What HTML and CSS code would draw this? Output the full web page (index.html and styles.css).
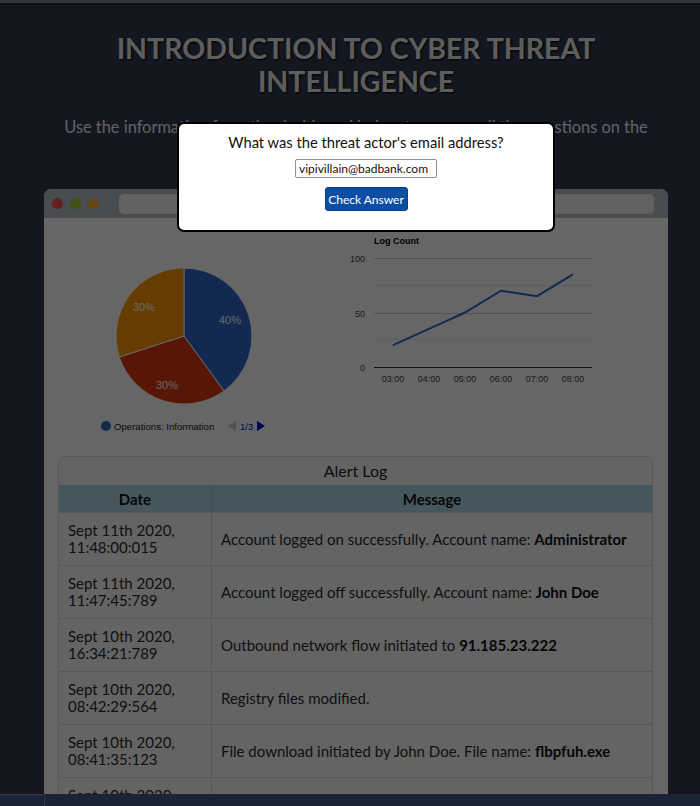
FILE: index.html
```html
<!DOCTYPE html>
<html lang="en">
<head>
<meta charset="utf-8">
<title>Introduction to Cyber Threat Intelligence</title>
<link rel="stylesheet" href="styles.css">
</head>
<body>
<div class="topstrip"></div>
<main class="page">
  <h1 class="title">INTRODUCTION TO CYBER THREAT<br>INTELLIGENCE</h1>
  <p class="lead">Use the information from the dashboard below to answer all the questions on the<br>next page.</p>

  <section class="window">
    <div class="window-bar">
      <span class="dot dot-red"></span>
      <span class="dot dot-green"></span>
      <span class="dot dot-orange"></span>
      <div class="address"></div>
    </div>
    <div class="window-body">
      <div class="charts">
        <svg class="pie" width="290" height="225" viewBox="0 0 290 225">
          <path d="M126 117 L126 49 A68 68 0 0 1 165.97 172.01 Z" fill="#3366cc" stroke="#ffffff" stroke-width="1"/>
          <path d="M126 117 L165.97 172.01 A68 68 0 0 1 61.33 138.01 Z" fill="#dc3912" stroke="#ffffff" stroke-width="1"/>
          <path d="M126 117 L61.33 138.01 A68 68 0 0 1 126 49 Z" fill="#ff9900" stroke="#ffffff" stroke-width="1"/>
          <text x="172" y="105" class="pie-label" text-anchor="middle">40%</text>
          <text x="109" y="170" class="pie-label" text-anchor="middle">30%</text>
          <text x="86" y="92" class="pie-label" text-anchor="middle">30%</text>
          <circle cx="48" cy="207" r="5" fill="#3366cc"/>
          <text x="56" y="211" class="legend">Operations: Information</text>
          <path d="M178 202 L178 212 L170 207 Z" fill="#cccccc"/>
          <text x="182" y="211" class="legend legend-page">1/3</text>
          <path d="M199 202 L199 212 L207 207 Z" fill="#0000cc"/>
        </svg>
        <svg class="line" width="305" height="225" viewBox="0 0 305 225">
          <text x="26" y="25" class="chart-title">Log Count</text>
          <line x1="26" y1="39.5" x2="244" y2="39.5" stroke="#cccccc"/>
          <line x1="26" y1="66.5" x2="244" y2="66.5" stroke="#ebebeb"/>
          <line x1="26" y1="94.5" x2="244" y2="94.5" stroke="#cccccc"/>
          <line x1="26" y1="120.5" x2="244" y2="120.5" stroke="#ebebeb"/>
          <line x1="26" y1="148.5" x2="244" y2="148.5" stroke="#333333"/>
          <text x="17" y="43" class="axis" text-anchor="end">100</text>
          <text x="17" y="98" class="axis" text-anchor="end">50</text>
          <text x="17" y="152" class="axis" text-anchor="end">0</text>
          <text x="45" y="163" class="axis" text-anchor="middle">03:00</text>
          <text x="81" y="163" class="axis" text-anchor="middle">04:00</text>
          <text x="117" y="163" class="axis" text-anchor="middle">05:00</text>
          <text x="153" y="163" class="axis" text-anchor="middle">06:00</text>
          <text x="189" y="163" class="axis" text-anchor="middle">07:00</text>
          <text x="225" y="163" class="axis" text-anchor="middle">08:00</text>
          <polyline points="45,126.2 81,109.9 117,93.5 153,71.7 189,77.2 225,55.4" fill="none" stroke="#3366cc" stroke-width="2"/>
        </svg>
      </div>

      <div class="panel">
        <div class="panel-title">Alert Log</div>
        <table class="log">
          <thead>
            <tr><th class="col-date">Date</th><th>Message</th></tr>
          </thead>
          <tbody>
            <tr><td>Sept 11th 2020,<br>11:48:00:015</td><td>Account logged on successfully. Account name: <b>Administrator</b></td></tr>
            <tr><td>Sept 11th 2020,<br>11:47:45:789</td><td>Account logged off successfully. Account name: <b>John Doe</b></td></tr>
            <tr><td>Sept 10th 2020,<br>16:34:21:789</td><td>Outbound network flow initiated to <b>91.185.23.222</b></td></tr>
            <tr><td>Sept 10th 2020,<br>08:42:29:564</td><td>Registry files modified.</td></tr>
            <tr><td>Sept 10th 2020,<br>08:41:35:123</td><td>File download initiated by John Doe. File name: <b>flbpfuh.exe</b></td></tr>
            <tr><td>Sept 10th 2020,<br>08:40:12:456</td><td>Account logged on successfully. Account name: <b>John Doe</b></td></tr>
          </tbody>
        </table>
      </div>
    </div>
  </section>
</main>

<div class="overlay">
  <div class="modal">
    <p class="question">What was the threat actor's email address?</p>
    <input class="answer" type="text" value="vipivillain@badbank.com">
    <button class="check" type="button">Check Answer</button>
  </div>
</div>

<div class="taskbar"><div class="tab"></div></div>
</body>
</html>
```

FILE: styles.css
```css
html, body {
  margin: 0;
  padding: 0;
  overflow: hidden;
  height: 100%;
}

body {
  background: #333a50;
  font-family: Lato, "Noto Sans", sans-serif;
  color: #333;
}

.topstrip {
  position: fixed;
  top: 0;
  left: 0;
  right: 0;
  height: 3px;
  background: #35353e;
  border-bottom: 2px solid #0e1015;
  z-index: 20;
}

.page {
  padding: 0 32px 0 44px;
}

.title {
  margin: 32px 0 0;
  font-size: 28.5px;
  line-height: 33px;
  font-weight: 700;
  text-align: center;
  color: #ececec;
  text-shadow: 1px 1px 2px #000;
}

.lead {
  margin: 17px 0 0;
  font-size: 16.4px;
  line-height: 24px;
  text-align: center;
  color: #f4f4f4;
  white-space: nowrap;
}

.window {
  margin-top: 26px;
  background: #ffffff;
  border-radius: 8px 8px 0 0;
  overflow: hidden;
}

.window-bar {
  height: 29px;
  background: #b4c0cd;
  display: flex;
  align-items: center;
  padding: 0 14px 0 8px;
  gap: 7px;
}

.dot {
  width: 11px;
  height: 11px;
  border-radius: 50%;
  flex: none;
}
.dot-red { background: #ff4b4b; }
.dot-green { background: #99cc33; }
.dot-orange { background: #ffaa33; }

.address {
  flex: 1;
  height: 20px;
  margin-left: 13px;
  background: #f5f5f5;
  border-radius: 5px;
}

.window-body {
  padding: 1px 15px 40px 14px;
}

.charts {
  display: flex;
}

.charts svg { display: block; }

.pie-label {
  font-family: "Liberation Sans", Arial, sans-serif;
  font-size: 11px;
  fill: #ffffff;
}

.legend {
  font-family: "Liberation Sans", Arial, sans-serif;
  font-size: 9.6px;
  fill: #222222;
}
.legend-page { fill: #0011cc; }

.chart-title {
  font-family: "Liberation Sans", Arial, sans-serif;
  font-size: 9px;
  font-weight: 700;
  fill: #000;
}

.axis {
  font-family: "Liberation Sans", Arial, sans-serif;
  font-size: 9px;
  fill: #444444;
}

.panel {
  margin-top: 12px;
  border: 1px solid #dddddd;
  border-radius: 8px 8px 0 0;
  background: #fafafa;
  overflow: hidden;
}

.panel-title {
  height: 28px;
  line-height: 28px;
  text-align: center;
  font-size: 16px;
  color: #222;
}

.log {
  width: 100%;
  border-collapse: collapse;
  font-size: 15px;
  color: #2a2a2a;
}

.log th {
  background: #add8e6;
  height: 27px;
  padding: 0;
  font-weight: 700;
  color: #111;
  border-right: 1px solid #9fc4d2;
}
.log th:last-child { border-right: 0; }

.log .col-date { width: 152px; }

.log td {
  padding: 9px 9px;
  line-height: 17px;
  text-align: left;
  vertical-align: middle;
  border-top: 1px solid #dddddd;
  border-right: 1px solid #dddddd;
}
.log td:last-child { border-right: 0; }

.log b { color: #111; }

.overlay {
  position: fixed;
  inset: 0;
  background: rgba(0, 0, 0, 0.6);
  z-index: 10;
  display: flex;
  justify-content: center;
  align-items: flex-start;
  padding: 122px 0 0 32px;
  box-sizing: border-box;
}

.modal {
  width: 378px;
  box-sizing: border-box;
  background: #fff;
  border: 2px solid #000;
  border-radius: 7px;
  padding: 9px 10px 19px;
  display: flex;
  flex-direction: column;
  align-items: center;
}

.question {
  margin: 0;
  font-size: 14.7px;
  line-height: 18px;
  color: #111;
}

.answer {
  margin-top: 8px;
  width: 142px;
  height: 19px;
  box-sizing: border-box;
  border: 1px solid #8f8f8f;
  border-radius: 2px;
  padding: 0 3px;
  font-family: Lato, "Noto Sans", sans-serif;
  font-size: 12px;
  color: #111;
}

.check {
  margin-top: 9px;
  width: 83px;
  height: 24px;
  background: #0b4ea2;
  border: 1px solid #08408a;
  border-radius: 3px;
  color: #fff;
  font-family: Lato, "Noto Sans", sans-serif;
  font-size: 12px;
  white-space: nowrap;
  padding: 0;
}

.taskbar {
  position: fixed;
  left: 0;
  right: 0;
  bottom: 0;
  height: 12px;
  background: #1b2336;
  z-index: 20;
}

.tab {
  width: 44px;
  height: 12px;
  border-top: 1px solid #323d55;
  border-right: 1px solid #323d55;
  border-radius: 0 5px 0 0;
}
```
